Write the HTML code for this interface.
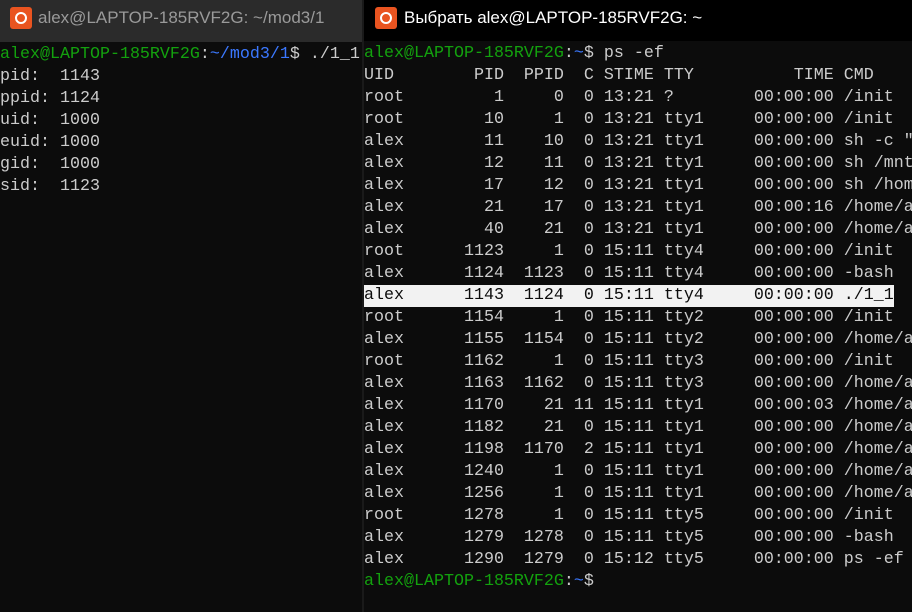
<!DOCTYPE html>
<html><head><meta charset="utf-8"><style>
body{margin:0;width:912px;height:612px;background:#0c0c0c;overflow:hidden;position:relative;font-family:"Liberation Mono","DejaVu Sans Mono",monospace}
.tb{position:absolute;top:0;height:42px;font-family:"Liberation Sans","DejaVu Sans",sans-serif;font-size:17px;line-height:36px}
.ic{position:absolute;top:7px;width:22px;height:22px;background:#e95420;border-radius:3px}
.ic:after{content:"";position:absolute;left:5px;top:5px;width:8px;height:8px;border:2px solid #fff;border-radius:50%}
pre{position:absolute;margin:0;font-family:"Liberation Mono","DejaVu Sans Mono",monospace;font-size:16.67px;line-height:22px;color:#cccccc;overflow:hidden}
.g{color:#13a10e}.b{color:#3b78ff}
.hl{background:#f2f2f2;color:#0c0c0c;display:inline-block;height:22px;vertical-align:top}
</style></head><body>
<div class="tb" style="left:0;width:362px;background:#2b2b2b;color:#9a9a9a"><div class="ic" style="left:10px"></div><span style="position:absolute;left:38px">alex@LAPTOP-185RVF2G: ~/mod3/1</span></div>
<div style="position:absolute;left:362px;top:0;width:2px;height:612px;background:#1a1a1a"></div>
<div class="tb" style="left:364px;width:548px;height:41px;background:#000;color:#fff"><div class="ic" style="left:11px"></div><span style="position:absolute;left:40px">Выбрать alex@LAPTOP-185RVF2G: ~</span></div>
<pre style="left:0;top:44px;width:362px;height:568px"><span class="g">alex@LAPTOP-185RVF2G</span>:<span class="b">~/mod3/1</span>$ ./1_1
pid:  1143
ppid: 1124
uid:  1000
euid: 1000
gid:  1000
sid:  1123</pre>
<pre style="left:364px;top:43px;width:548px;height:569px"><span class="g">alex@LAPTOP-185RVF2G</span>:<span class="b">~</span>$ ps -ef
UID        PID  PPID  C STIME TTY          TIME CMD
root         1     0  0 13:21 ?        00:00:00 /init
root        10     1  0 13:21 tty1     00:00:00 /init
alex        11    10  0 13:21 tty1     00:00:00 sh -c "
alex        12    11  0 13:21 tty1     00:00:00 sh /mnt
alex        17    12  0 13:21 tty1     00:00:00 sh /hom
alex        21    17  0 13:21 tty1     00:00:16 /home/a
alex        40    21  0 13:21 tty1     00:00:00 /home/a
root      1123     1  0 15:11 tty4     00:00:00 /init
alex      1124  1123  0 15:11 tty4     00:00:00 -bash
<span class="hl">alex      1143  1124  0 15:11 tty4     00:00:00 ./1_1</span>
root      1154     1  0 15:11 tty2     00:00:00 /init
alex      1155  1154  0 15:11 tty2     00:00:00 /home/a
root      1162     1  0 15:11 tty3     00:00:00 /init
alex      1163  1162  0 15:11 tty3     00:00:00 /home/a
alex      1170    21 11 15:11 tty1     00:00:03 /home/a
alex      1182    21  0 15:11 tty1     00:00:00 /home/a
alex      1198  1170  2 15:11 tty1     00:00:00 /home/a
alex      1240     1  0 15:11 tty1     00:00:00 /home/a
alex      1256     1  0 15:11 tty1     00:00:00 /home/a
root      1278     1  0 15:11 tty5     00:00:00 /init
alex      1279  1278  0 15:11 tty5     00:00:00 -bash
alex      1290  1279  0 15:12 tty5     00:00:00 ps -ef
<span class="g">alex@LAPTOP-185RVF2G</span>:<span class="b">~</span>$</pre>
</body></html>
